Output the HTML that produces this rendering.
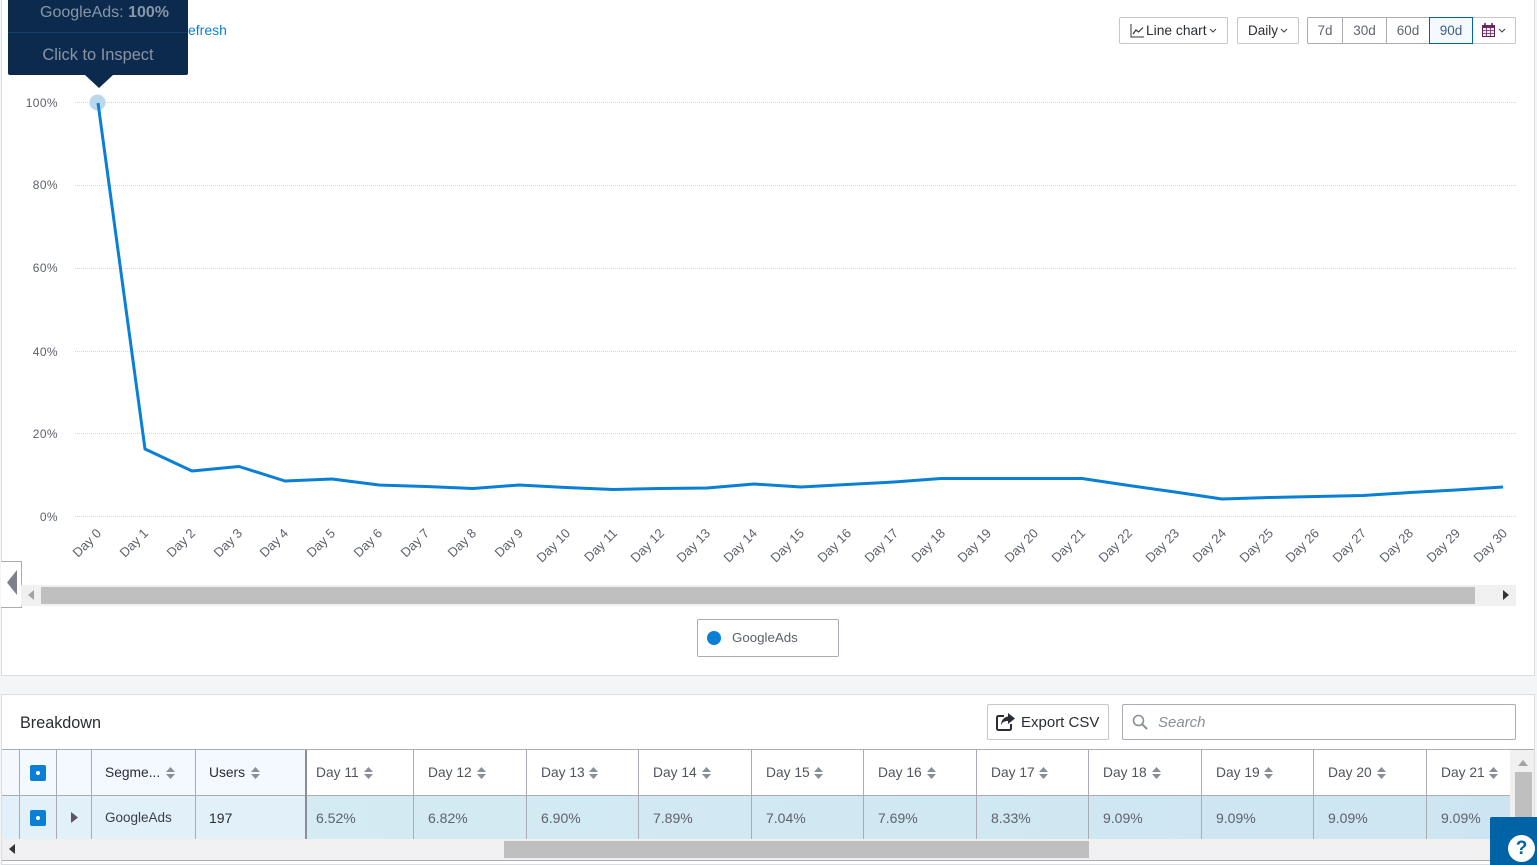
<!DOCTYPE html>
<html><head><meta charset="utf-8">
<style>
html,body{margin:0;padding:0;width:1537px;height:865px;overflow:hidden;background:#f4f5f7;font-family:"Liberation Sans",sans-serif;}
.a{position:absolute;box-sizing:border-box;}
.t{position:absolute;white-space:nowrap;line-height:16px;}
.btn{position:absolute;box-sizing:border-box;border:1px solid #c4c6cc;border-radius:2px;background:#fff;height:27px;top:17px;font-size:13.5px;line-height:25px;color:#2a2d33;white-space:nowrap;}
.seg{position:absolute;box-sizing:border-box;top:17px;height:27px;border:1px solid #a8aab4;background:#fff;font-size:13.5px;line-height:25px;color:#61656f;text-align:center;}
.vl{position:absolute;width:1px;background:#a9abb5;}
.h{position:absolute;top:765px;font-size:13.800px;line-height:16px;color:#50545e;white-space:nowrap;}
.d{position:absolute;top:810px;font-size:14px;line-height:16px;color:#5d616b;white-space:nowrap;}
.cb{position:absolute;left:30px;width:16px;height:16px;background:#0a7fd6;border-radius:2px;}
.cb:after{content:"";position:absolute;left:6px;top:6px;width:4px;height:4px;border-radius:50%;background:#fff;}
</style></head><body>

<div class="a" style="left:1px;top:0;width:1534px;height:676px;background:#fff;border:1px solid #dcdde1;border-top:0;"></div>
<div class="a" style="left:1px;top:694px;width:1534px;height:171px;background:#fff;border:1px solid #dcdde1;"></div>

<div class="t" style="left:188px;top:22px;font-size:14px;color:#0a7fd6;">efresh</div>

<div class="btn" style="left:1119px;width:109px;padding-left:26px;font-size:13.8px;">Line chart</div>
<svg class="a" style="left:1130px;top:24px" width="15" height="14" viewBox="0 0 15 14"><path d="M1 0V13H14" fill="none" stroke="#333" stroke-width="1"/><path d="M3 10L6 6L8.500 8L13 3.500" fill="none" stroke="#333" stroke-width="1.200"/></svg>
<svg class="a" style="left:1209px;top:28px" width="8" height="6"><path d="M1 1L4 4L7 1" fill="none" stroke="#444" stroke-width="1.100"/></svg>
<div class="btn" style="left:1237px;width:62px;padding-left:10px;">Daily</div>
<svg class="a" style="left:1280px;top:28px" width="8" height="6"><path d="M1 1L4 4L7 1" fill="none" stroke="#444" stroke-width="1.100"/></svg>

<div class="seg" style="left:1307px;width:36px;border-radius:2px 0 0 2px;">7d</div>
<div class="seg" style="left:1342px;width:45px;">30d</div>
<div class="seg" style="left:1386px;width:44px;">60d</div>
<div class="seg" style="left:1429px;width:44px;background:#f4f9ff;border-color:#0063a6;color:#3d5f86;z-index:2;">90d</div>
<div class="seg" style="left:1472px;width:44px;border-color:#c4c6cc;border-left:0;border-radius:0 2px 2px 0;"></div>
<svg class="a" style="left:1482px;top:23px;z-index:3" width="13" height="15" viewBox="0 0 13 15"><rect x=".5" y="2.500" width="12" height="11" fill="#f3e9f1" stroke="#5b1f52"/><rect x="0" y="2" width="13" height="3" fill="#6c2a62"/><path d="M3 0V4M10 0V4" stroke="#5b1f52" stroke-width="1.500"/><path d="M4.500 5V13M8.500 5V13M1 7.500H12M1 10.500H12" stroke="#6c2a62" stroke-width=".8"/></svg>
<svg class="a" style="left:1498px;top:28px;z-index:3" width="8" height="6"><path d="M1 1L4 4L7 1" fill="none" stroke="#444" stroke-width="1.100"/></svg>

<svg class="a" style="left:0;top:0" width="1537" height="610" viewBox="0 0 1537 610" font-family="Liberation Sans, sans-serif">
<g stroke="#d3d5da" stroke-width="1" stroke-dasharray="1 1">
<path d="M75 102.500H1516M75 185.500H1516M75 268.500H1516M75 351.500H1516M75 433.500H1516M75 516.500H1516"/>
</g>
<g font-size="12" letter-spacing=".4" fill="#5d616b" text-anchor="end">
<text x="58" y="107">100%</text><text x="58" y="189">80%</text><text x="58" y="272">60%</text><text x="58" y="356">40%</text><text x="58" y="438">20%</text><text x="58" y="521">0%</text>
</g>
<circle cx="97.500" cy="102.500" r="8" fill="#b9d8ee"/>
<polyline fill="none" stroke="#0a7fd6" stroke-width="3" stroke-linejoin="round" points="98,103 145,449 192,471 239,466.500 285,481 332,479 379,485 426,486.500 473,488.500 519,485 566,487.500 613,489.500 660,488.500 707,488 754,484 801,487 847,484.500 894,482 941,478.500 988,478.500 1035,478.500 1082,478.500 1129,485.500 1175,492 1222,499 1269,497.500 1316,496.500 1363,495.500 1410,492.500 1456,490 1503,487"/>
<g font-size="13" fill="#5d616b" text-anchor="end">
<text transform="translate(102,534) rotate(-45)">Day 0</text>
<text transform="translate(149,534) rotate(-45)">Day 1</text>
<text transform="translate(196,534) rotate(-45)">Day 2</text>
<text transform="translate(243,534) rotate(-45)">Day 3</text>
<text transform="translate(289,534) rotate(-45)">Day 4</text>
<text transform="translate(336,534) rotate(-45)">Day 5</text>
<text transform="translate(383,534) rotate(-45)">Day 6</text>
<text transform="translate(430,534) rotate(-45)">Day 7</text>
<text transform="translate(477,534) rotate(-45)">Day 8</text>
<text transform="translate(524,534) rotate(-45)">Day 9</text>
<text transform="translate(571,534) rotate(-45)">Day 10</text>
<text transform="translate(618,534) rotate(-45)">Day 11</text>
<text transform="translate(665,534) rotate(-45)">Day 12</text>
<text transform="translate(711,534) rotate(-45)">Day 13</text>
<text transform="translate(758,534) rotate(-45)">Day 14</text>
<text transform="translate(805,534) rotate(-45)">Day 15</text>
<text transform="translate(852,534) rotate(-45)">Day 16</text>
<text transform="translate(899,534) rotate(-45)">Day 17</text>
<text transform="translate(946,534) rotate(-45)">Day 18</text>
<text transform="translate(992,534) rotate(-45)">Day 19</text>
<text transform="translate(1039,534) rotate(-45)">Day 20</text>
<text transform="translate(1086,534) rotate(-45)">Day 21</text>
<text transform="translate(1133,534) rotate(-45)">Day 22</text>
<text transform="translate(1180,534) rotate(-45)">Day 23</text>
<text transform="translate(1227,534) rotate(-45)">Day 24</text>
<text transform="translate(1274,534) rotate(-45)">Day 25</text>
<text transform="translate(1320,534) rotate(-45)">Day 26</text>
<text transform="translate(1367,534) rotate(-45)">Day 27</text>
<text transform="translate(1414,534) rotate(-45)">Day 28</text>
<text transform="translate(1461,534) rotate(-45)">Day 29</text>
<text transform="translate(1508,534) rotate(-45)">Day 30</text>
</g>
</svg>

<div class="a" style="left:8px;top:0;width:180px;height:75px;background:#0c2a4d;border-radius:0 0 2px 2px;"></div>
<div class="a" style="left:8px;top:32px;width:180px;height:1px;background:#0f4068;"></div>
<svg class="a" style="left:85px;top:75px" width="28" height="14"><path d="M0 0H28L14 13Z" fill="#0c2a4d"/></svg>
<div class="t" style="left:40px;top:5px;font-size:16px;color:#8a95a6;">GoogleAds: <b>100%</b></div>
<div class="t" style="left:8px;width:180px;text-align:center;top:47px;font-size:16.400px;color:#8a95a6;">Click to Inspect</div>

<div class="a" style="left:1px;top:561px;width:21px;height:47px;background:#fff;border:1px solid #a9abb5;border-left:0;"></div>
<svg class="a" style="left:7px;top:570px" width="12" height="26"><path d="M10 0V25L0 12.500Z" fill="#7d818c"/></svg>
<div class="a" style="left:21px;top:585px;width:1495px;height:21px;background:#f0f0f0;"></div>
<div class="a" style="left:41px;top:587px;width:1434px;height:17px;background:#bfbfbf;"></div>
<svg class="a" style="left:28px;top:590px" width="7" height="11"><path d="M6 0V10L0 5Z" fill="#a3a3a3"/></svg>
<svg class="a" style="left:1503px;top:590px" width="7" height="11"><path d="M0 0V10L6 5Z" fill="#333"/></svg>

<div class="a" style="left:697px;top:619px;width:142px;height:38px;background:#fff;border:1px solid #a9abb5;border-radius:2px;"></div>
<div class="a" style="left:707px;top:631px;width:14px;height:14px;border-radius:50%;background:#0a7fd6;"></div>
<div class="t" style="left:732px;top:630px;font-size:13.300px;color:#5d616b;">GoogleAds</div>

<div class="t" style="left:20px;top:715px;font-size:16.200px;color:#2a2d33;">Breakdown</div>

<div class="a" style="left:987px;top:704px;width:122px;height:36px;background:#fff;border:1px solid #c4c6cc;border-radius:2px;"></div>
<svg class="a" style="left:996px;top:713px" width="19" height="18" viewBox="0 0 19 18"><path d="M8 3H2.500A1.500 1.500 0 0 0 1 4.500V15.500A1.500 1.500 0 0 0 2.500 17H13.500A1.500 1.500 0 0 0 15 15.500V11" fill="none" stroke="#2a2d33" stroke-width="2"/><path d="M12 0L19 5.500L12 11V8C8.500 8 6.500 9 5 12C5 7.500 8 4 12 3.500Z" fill="#2a2d33"/></svg>
<div class="t" style="left:1021px;top:715px;font-size:15px;color:#2a2d33;">Export CSV</div>

<div class="a" style="left:1122px;top:704px;width:394px;height:36px;background:#fff;border:1px solid #a9abb5;border-radius:2px;"></div>
<svg class="a" style="left:1132px;top:714px" width="16" height="16" viewBox="0 0 16 16"><circle cx="6.500" cy="6.500" r="5" fill="none" stroke="#8a8e98" stroke-width="1.600"/><path d="M10 10L15 15" stroke="#8a8e98" stroke-width="2"/></svg>
<div class="t" style="left:1158px;top:715px;font-size:15px;font-style:italic;color:#8a8e98;">Search</div>

<!-- table -->
<div class="a" style="left:2px;top:749px;width:1532px;height:1px;background:#a9abb5;"></div>
<div class="a" style="left:2px;top:750px;width:303px;height:45px;background:#f4f9ff;"></div>
<div class="a" style="left:305px;top:750px;width:1205px;height:45px;background:#fff;"></div>
<div class="a" style="left:2px;top:795px;width:1510px;height:1px;background:#a9abb5;"></div>
<div class="a" style="left:2px;top:796px;width:304px;height:43px;background:#e2f0f9;"></div>
<div class="a" style="left:306px;top:796px;width:1207px;height:43px;background:linear-gradient(90deg,#d4ebf3,#cde5f2);"></div>
<div class="a" style="left:2px;top:839px;width:1532px;height:22px;background:#f0f0f0;"></div>
<div class="a" style="left:2px;top:860px;width:1532px;height:1px;background:#a9abb5;"></div>

<div class="vl" style="left:19px;top:750px;height:89px;"></div>
<div class="vl" style="left:56px;top:750px;height:89px;"></div>
<div class="vl" style="left:91px;top:750px;height:89px;"></div>
<div class="vl" style="left:195px;top:750px;height:89px;"></div>
<div class="vl" style="left:305px;top:750px;height:89px;width:2px;background:#8a8e98;"></div>
<div class="vl" style="left:413px;top:750px;height:89px;"></div>
<div class="vl" style="left:526px;top:750px;height:89px;"></div>
<div class="vl" style="left:638px;top:750px;height:89px;"></div>
<div class="vl" style="left:751px;top:750px;height:89px;"></div>
<div class="vl" style="left:863px;top:750px;height:89px;"></div>
<div class="vl" style="left:976px;top:750px;height:89px;"></div>
<div class="vl" style="left:1088px;top:750px;height:89px;"></div>
<div class="vl" style="left:1201px;top:750px;height:89px;"></div>
<div class="vl" style="left:1313px;top:750px;height:89px;"></div>
<div class="vl" style="left:1426px;top:750px;height:89px;"></div>

<div class="cb" style="top:765px;"></div>
<div class="cb" style="top:810px;"></div>
<svg class="a" style="left:71px;top:812px" width="8" height="12"><path d="M0 0V11L7 5.500Z" fill="#5a5560"/></svg>

<svg class="a" style="left:0;top:766px" width="1537" height="14" fill="#8a8e98">
<path d="M166 6L170.500 1L175 6ZM166 8L170.500 13L175 8Z"/>
<path d="M251 6L255.500 1L260 6ZM251 8L255.500 13L260 8Z"/>
<path d="M364 6L368.500 1L373 6ZM364 8L368.500 13L373 8Z"/>
<path d="M477 6L481.500 1L486 6ZM477 8L481.500 13L486 8Z"/>
<path d="M589 6L593.500 1L598 6ZM589 8L593.500 13L598 8Z"/>
<path d="M702 6L706.500 1L711 6ZM702 8L706.500 13L711 8Z"/>
<path d="M814 6L818.500 1L823 6ZM814 8L818.500 13L823 8Z"/>
<path d="M927 6L931.500 1L936 6ZM927 8L931.500 13L936 8Z"/>
<path d="M1039 6L1043.500 1L1048 6ZM1039 8L1043.500 13L1048 8Z"/>
<path d="M1152 6L1156.500 1L1161 6ZM1152 8L1156.500 13L1161 8Z"/>
<path d="M1264 6L1268.500 1L1273 6ZM1264 8L1268.500 13L1273 8Z"/>
<path d="M1377 6L1381.500 1L1386 6ZM1377 8L1381.500 13L1386 8Z"/>
<path d="M1489 6L1493.500 1L1498 6ZM1489 8L1493.500 13L1498 8Z"/>
</svg>

<div class="h" style="left:105px;color:#2a2d33;">Segme...</div>
<div class="h" style="left:209px;color:#2a2d33;">Users</div>
<div class="h" style="left:316px;">Day 11</div>
<div class="h" style="left:428px;">Day 12</div>
<div class="h" style="left:541px;">Day 13</div>
<div class="h" style="left:653px;">Day 14</div>
<div class="h" style="left:766px;">Day 15</div>
<div class="h" style="left:878px;">Day 16</div>
<div class="h" style="left:991px;">Day 17</div>
<div class="h" style="left:1103px;">Day 18</div>
<div class="h" style="left:1216px;">Day 19</div>
<div class="h" style="left:1328px;">Day 20</div>
<div class="h" style="left:1441px;">Day 21</div>

<div class="d" style="left:105px;color:#3a3d45;font-size:13.500px;">GoogleAds</div>
<div class="d" style="left:209px;color:#2a2d33;">197</div>
<div class="d" style="left:316px;">6.52%</div>
<div class="d" style="left:428px;">6.82%</div>
<div class="d" style="left:541px;">6.90%</div>
<div class="d" style="left:653px;">7.89%</div>
<div class="d" style="left:766px;">7.04%</div>
<div class="d" style="left:878px;">7.69%</div>
<div class="d" style="left:991px;">8.33%</div>
<div class="d" style="left:1103px;">9.09%</div>
<div class="d" style="left:1216px;">9.09%</div>
<div class="d" style="left:1328px;">9.09%</div>
<div class="d" style="left:1441px;">9.09%</div>

<div class="a" style="left:1510px;top:750px;width:24px;height:89px;background:#f0f0f0;"></div>
<div class="a" style="left:1515px;top:772px;width:17px;height:67px;background:#bfbfbf;"></div>
<svg class="a" style="left:1518px;top:760px" width="11" height="7"><path d="M0 6H10L5 0Z" fill="#a3a3a3"/></svg>
<svg class="a" style="left:9px;top:844px" width="7" height="11"><path d="M6 0V10L0 5Z" fill="#333"/></svg>
<div class="a" style="left:504px;top:841px;width:585px;height:17px;background:#bfbfbf;"></div>

<div class="a" style="left:1490px;top:817px;width:47px;height:48px;background:#0063a6;border-radius:2px 0 0 0;"></div>
<div class="a" style="left:1508px;top:835px;width:27px;height:27px;border-radius:50%;background:#fff;"></div>
<div class="t" style="left:1508px;width:27px;text-align:center;top:840px;font-size:19px;font-weight:bold;line-height:18px;color:#0063a6;">?</div>

</body></html>
